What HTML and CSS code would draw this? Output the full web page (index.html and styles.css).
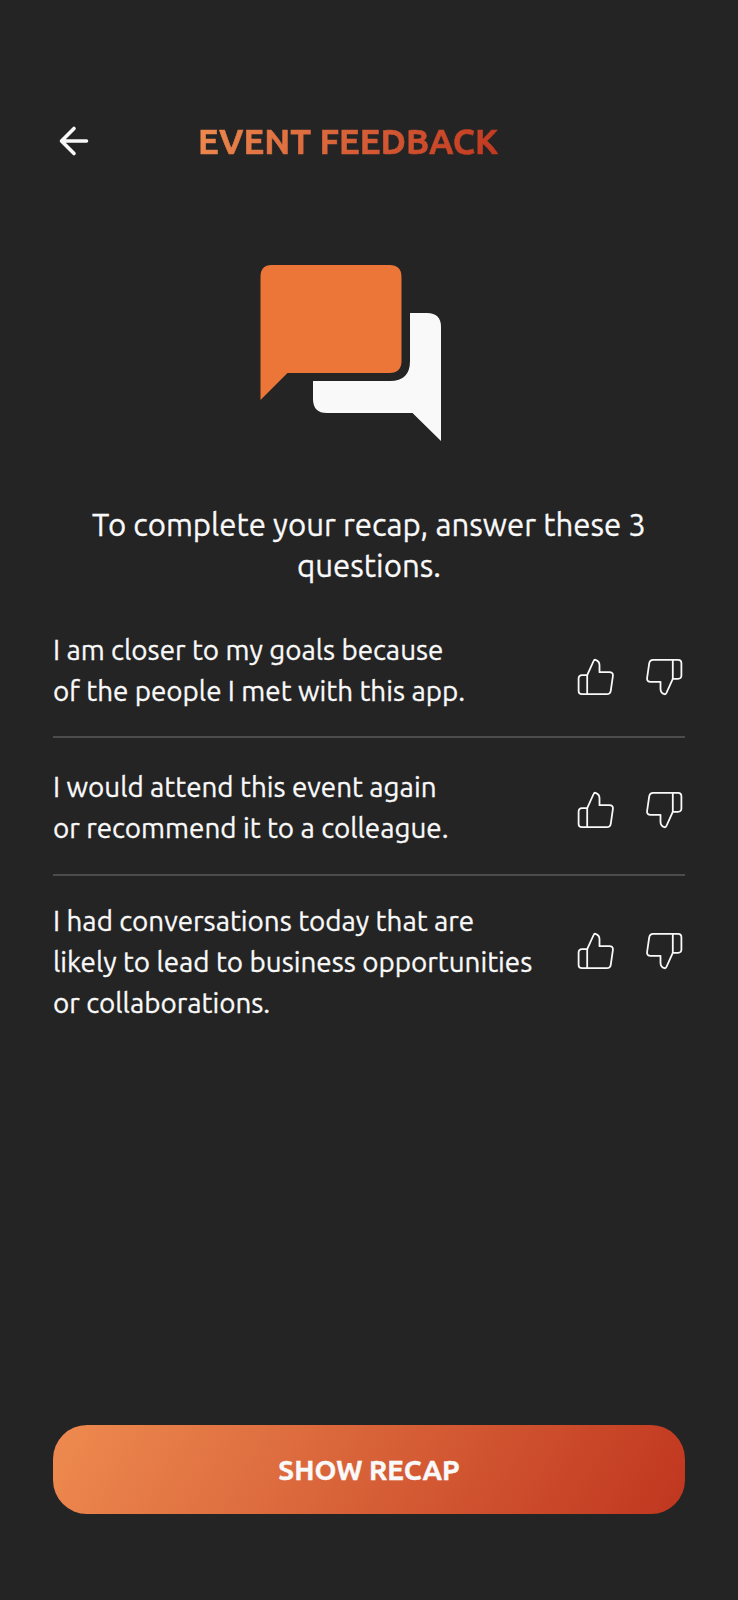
FILE: index.html
```html
<!DOCTYPE html>
<html lang="en">
<head>
<meta charset="utf-8">
<title>Event Feedback</title>
<link rel="stylesheet" href="styles.css">
</head>
<body>
<svg width="0" height="0" class="defs">
  <symbol id="thumb" viewBox="0 0 38 38">
    <path d="M10.2 17.2H5Q1.6 17.2 1.6 20.6V32.8Q1.6 36.2 5 36.2H10.2Z"/>
    <path d="M10.2 17.2L16.6 3Q17.2 1.5 18.5 1.8Q22.5 3 22.5 7.3V14.2H32.3Q36.4 14.2 35.9 18L33.8 32.6Q33.2 36.2 29.8 36.2H10.2"/>
  </symbol>
</svg>
<main class="screen">
  <header class="header">
    <svg class="back" viewBox="0 0 32 32"><path d="M28.5 16H4M16 3.5L3.5 16L16 28.5"/></svg>
    <h1 class="title">EVENT FEEDBACK</h1>
  </header>
  <svg class="chat" viewBox="0 0 182 178">
    <path fill="#eb7637" d="M11.5 1H129.5Q141.5 1 141.5 13V97Q141.5 109 129.5 109H27.5L.5 136V13Q.5 1 11.5 1Z"/>
    <path fill="#f9f9f9" d="M150 49H167Q181 49 181 63V177L152.5 149H67Q53 149 53 135V117H130Q150 117 150 97Z"/>
  </svg>
  <p class="intro">To complete your recap, answer these 3<br>questions.</p>
  <ul class="questions">
    <li class="question first">
      <p class="text">I am closer to my goals because<br>of the people I met with this app.</p>
      <div class="votes"><svg class="thumb"><use href="#thumb"/></svg><svg class="thumb down"><use href="#thumb"/></svg></div>
    </li>
    <li class="question">
      <p class="text">I would attend this event again<br>or recommend it to a colleague.</p>
      <div class="votes"><svg class="thumb"><use href="#thumb"/></svg><svg class="thumb down"><use href="#thumb"/></svg></div>
    </li>
    <li class="question last">
      <p class="text">I had conversations today that are<br>likely to lead to business opportunities<br>or collaborations.</p>
      <div class="votes"><svg class="thumb"><use href="#thumb"/></svg><svg class="thumb down"><use href="#thumb"/></svg></div>
    </li>
  </ul>
  <button class="recap">SHOW RECAP</button>
</main>
</body>
</html>
```
FILE: styles.css
```css
* { box-sizing: border-box; margin: 0; padding: 0; }
body { background: #242424; color: #f9f9f9; font-family: Ubuntu, "Open Sans", sans-serif; }
.defs { display: block; }
.screen { height: 1600px; padding: 116px 53px 86px; display: flex; flex-direction: column; }
.header { display: flex; align-items: center; height: 50px; }
.back { width: 32px; height: 32px; margin-left: 5px; fill: none; stroke: #f9f9f9; stroke-width: 3.6; stroke-linecap: round; stroke-linejoin: round; }
.title { margin-left: 108px; font-size: 34.9px; line-height: 50px; font-weight: 700; white-space: nowrap; background: linear-gradient(120deg, #ee8b50, #c0361f); -webkit-background-clip: text; background-clip: text; color: transparent; -webkit-text-stroke: 0.6px transparent; }
.chat { display: block; width: 182px; height: 178px; margin: 98px 0 0 206.6px; }
.intro { margin-top: 62px; text-align: center; font-size: 31.2px; line-height: 41.3px; white-space: nowrap; -webkit-text-stroke: 0.3px #f9f9f9; }
.questions { list-style: none; margin-top: 42px; }
.question { display: flex; justify-content: space-between; align-items: flex-start; height: 137.8px; padding-top: 27.8px; border-bottom: 2px solid #4c4c4c; }
.first { height: 109.2px; padding-top: 0; }
.last { padding-top: 24px; border: 0; }
.text { font-size: 27.8px; line-height: 41.3px; white-space: nowrap; -webkit-text-stroke: 0.3px #f9f9f9; }
.votes { display: flex; gap: 30.4px; margin: 25.2px 2px 0 0; }
.first .votes { margin-top: 29px; }
.last .votes { margin-top: 32.6px; }
.thumb { width: 38px; height: 38px; fill: none; stroke: #f9f9f9; stroke-width: 1.8; stroke-linejoin: round; }
.down { transform: rotate(180deg); }
.recap { margin-top: auto; height: 89px; border: 0; border-radius: 34px; background: linear-gradient(120deg, #ee8b50, #c0361f); color: #f9f9f9; font: 700 27.9px Ubuntu, "Open Sans", sans-serif; -webkit-text-stroke: 0.4px #f9f9f9; }
```
